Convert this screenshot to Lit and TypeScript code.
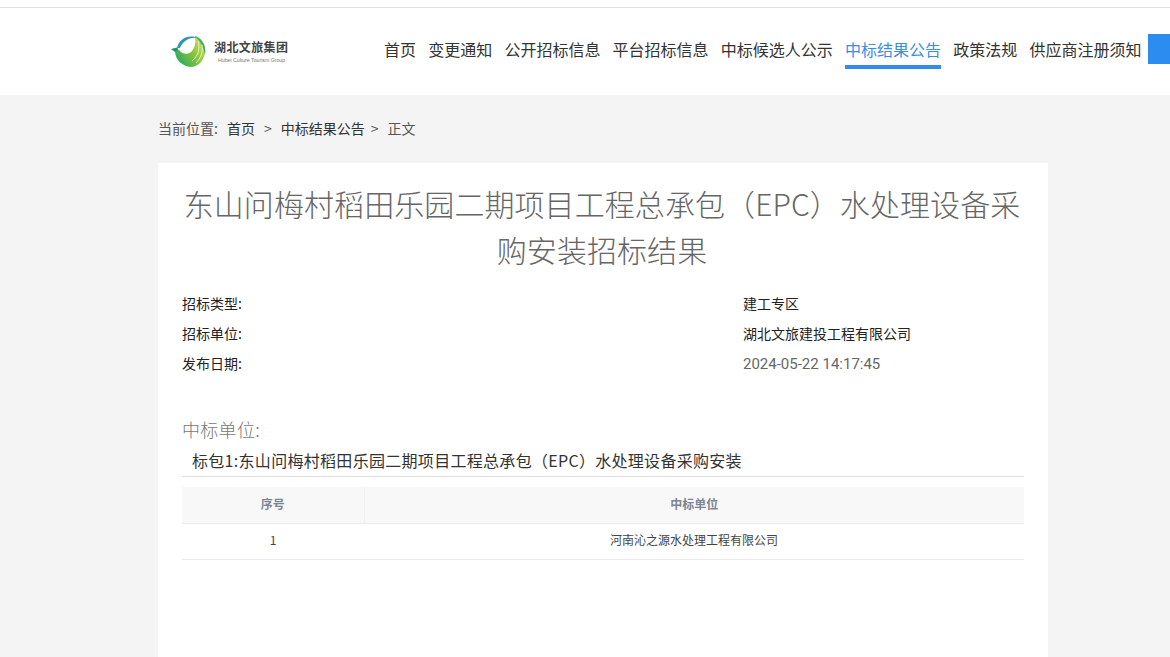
import { LitElement, css, html } from "lit";
import { customElement } from "lit/decorators.js";

const NAV = [
    "首页",
    "变更通知",
    "公开招标信息",
    "平台招标信息",
    "中标候选人公示",
    "中标结果公告",
    "政策法规",
    "供应商注册须知",
];
const ACTIVE = "中标结果公告";

const INFO = [
    ["招标类型:", "建工专区"],
    ["招标单位:", "湖北文旅建投工程有限公司"],
    ["发布日期:", "2024-05-22 14:17:45"],
];

@customElement("app-root")
export default class AppRoot extends LitElement {
    static styles = css`
        :host {
            display: block;
            height: 657px;
            overflow: hidden;
            background: #f4f4f4;
            font-family: "Noto Sans CJK SC", "Liberation Sans", sans-serif;
            color: #333;
        }

        .topline {
            height: 7px;
            background: #fff;
            border-bottom: 1px solid #e2e2e2;
        }

        .header {
            height: 87px;
            background: #fff;
            display: flex;
            align-items: flex-start;
            overflow: hidden;
        }

        .logo {
            margin: 26px 0 0 170px;
            width: 130px;
            display: flex;
            align-items: center;
            gap: 6px;
            flex: none;
        }

        .logo-text {
            display: flex;
            flex-direction: column;
            gap: 3px;
        }

        .logo-cn {
            font-size: 12px;
            line-height: 14px;
            font-weight: 700;
            letter-spacing: 0.4px;
            color: #444;
            white-space: nowrap;
        }

        .logo-en {
            font-family: "Liberation Sans", sans-serif;
            font-size: 5.2px;
            line-height: 7px;
            color: #777;
            white-space: nowrap;
            padding-left: 4px;
        }

        .nav {
            display: flex;
            gap: 12.2px;
            margin-left: 84px;
            flex: none;
        }

        .nav-item {
            margin-top: 30px;
            height: 31px;
            font-size: 16px;
            line-height: 22px;
            color: #333;
            white-space: nowrap;
            box-sizing: border-box;
        }

        .nav-item.active {
            color: #3a8ee6;
            border-bottom: 4px solid #2f8bf0;
        }

        .blue-btn {
            margin: 26px 0 0 7px;
            width: 30px;
            height: 30px;
            background: #2d8cf0;
            flex: none;
        }

        .main {
            width: 890px;
            margin-left: 158px;
        }

        .crumbs {
            height: 68px;
            box-sizing: border-box;
            padding-bottom: 2px;
            display: flex;
            align-items: center;
            font-size: 14px;
            color: #555;
            white-space: nowrap;
        }

        .crumbs .link {
            color: #333;
        }

        .crumbs .here {
            margin-left: 9px;
        }

        .crumbs .tight {
            margin-left: 6px;
        }

        .panel {
            background: #fff;
            padding: 17px 24px 0;
            height: 500px;
        }

        h1 {
            margin: 0 1px 0 -1px;
            font-size: 30px;
            line-height: 46px;
            font-weight: 300;
            letter-spacing: 0.08px;
            color: #666;
            text-align: center;
        }

        .info {
            margin-top: 16px;
            display: grid;
        }

        .info-row {
            display: grid;
            grid-template-columns: 561px 1fr;
            height: 30px;
            align-items: center;
            font-size: 14px;
            color: #222;
        }

        .date {
            padding-top: 2px;
            font-family: "Roboto", "Liberation Sans", sans-serif;
            font-size: 15px;
            color: #666;
        }

        .section {
            margin-top: 38px;
            font-size: 18px;
            line-height: 26px;
            font-weight: 300;
            letter-spacing: 0.3px;
            color: #777;
        }

        .package {
            height: 34px;
            padding-left: 10px;
            font-size: 16px;
            line-height: 37px;
            letter-spacing: 0.3px;
            color: #333;
            border-bottom: 1px solid #ddd;
        }

        table {
            width: 100%;
            margin-top: 10px;
            border-collapse: collapse;
            table-layout: fixed;
            font-size: 12px;
        }

        th {
            height: 36px;
            padding: 0 0 2px;
            box-sizing: border-box;
            background: #f8f8f9;
            color: #7d8592;
            font-weight: 700;
            border-bottom: 1px solid #e8eaec;
        }

        th + th {
            border-left: 1px solid #eef0f2;
        }

        td {
            height: 36px;
            padding: 0 0 3px;
            box-sizing: border-box;
            text-align: center;
            color: #444;
            border-bottom: 1px solid #e8eaec;
        }

        .col-index {
            width: 182px;
        }
    `;

    private renderLogo() {
        return html`<svg width="38" height="36" viewBox="0 0 38 36">
            <defs>
                <linearGradient id="ring" x1="0" y1="1" x2="1" y2="0.3">
                    <stop offset="0" stop-color="#12a06e" />
                    <stop offset="0.55" stop-color="#7cc23c" />
                    <stop offset="1" stop-color="#c9de4e" />
                </linearGradient>
            </defs>
            <path d="M1 15 L7 13.5 L9 17 L5 18 Z" fill="#159a63" />
            <path
                d="M5 17 C5 26 13 33 22 33 C30 32 36 24 35 14 C34 8 30 4 25 2 C26 9 25 14 21 18 C17 21 12 20 9 16 Z"
                fill="url(#ring)"
            />
            <path
                d="M7 14 C9 5 18 0 28 4 C21 3 13 6 10 14 Z"
                fill="#2b97b8"
            />
            <path
                d="M25 2 C32 4 37 12 35 21 C34 14 31 8 25 2 Z"
                fill="#46ad6c"
            />
            <path
                d="M28 7 C30 14 29 21 22 27 M32 11 C33 18 31 24 26 29"
                fill="none"
                stroke="#fff"
                stroke-width="0.7"
            />
        </svg>`;
    }

    render() {
        return html`
            <div class="topline"></div>
            <header class="header">
                <div class="logo">
                    ${this.renderLogo()}
                    <div class="logo-text">
                        <span class="logo-cn">湖北文旅集团</span>
                        <span class="logo-en">Hubei Culture Tourism Group</span>
                    </div>
                </div>
                <nav class="nav">
                    ${NAV.map(
                        (item) =>
                            html`<div class="nav-item ${item === ACTIVE ? "active" : ""}">${item}</div>`,
                    )}
                </nav>
                <div class="blue-btn"></div>
            </header>
            <main class="main">
                <div class="crumbs">
                    <span>当前位置:</span>
                    <span class="link here">首页</span>
                    <span class="here">&gt;</span>
                    <span class="link here">中标结果公告</span>
                    <span class="tight">&gt;</span>
                    <span class="here">正文</span>
                </div>
                <section class="panel">
                    <h1>东山问梅村稻田乐园二期项目工程总承包（EPC）水处理设备采购安装招标结果</h1>
                    <div class="info">
                        ${INFO.map(
                            ([label, value]) => html`<div class="info-row">
                                <span>${label}</span>
                                <span class=${label === "发布日期:" ? "date" : ""}>${value}</span>
                            </div>`,
                        )}
                    </div>
                    <div class="section">中标单位:</div>
                    <div class="package">标包1:东山问梅村稻田乐园二期项目工程总承包（EPC）水处理设备采购安装</div>
                    <table>
                        <thead>
                            <tr>
                                <th class="col-index">序号</th>
                                <th>中标单位</th>
                            </tr>
                        </thead>
                        <tbody>
                            <tr>
                                <td>1</td>
                                <td>河南沁之源水处理工程有限公司</td>
                            </tr>
                        </tbody>
                    </table>
                </section>
            </main>
        `;
    }
}
